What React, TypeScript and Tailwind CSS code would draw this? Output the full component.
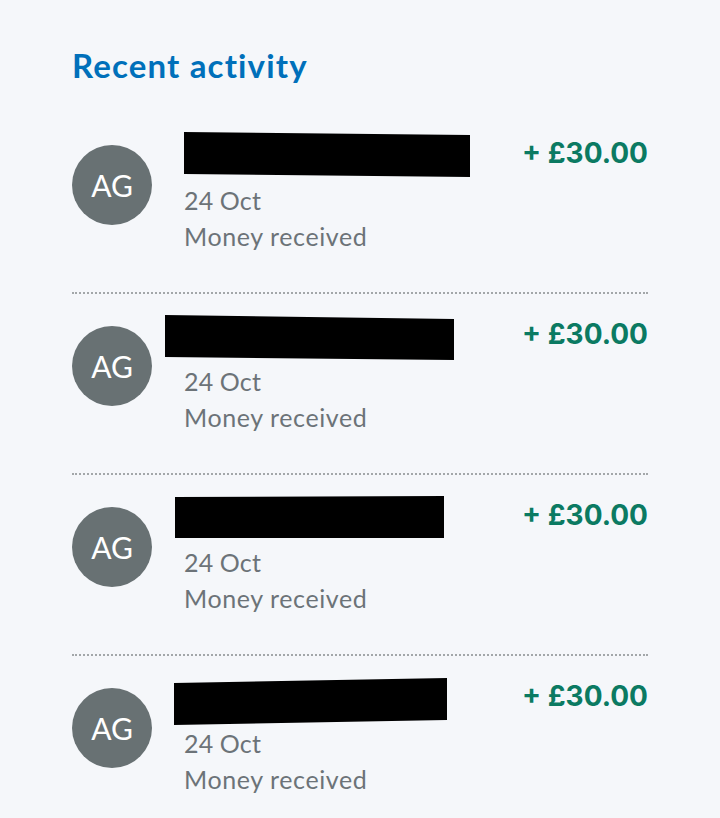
const bars = [
  "20,0 306,3 306,45 20,42",
  "1,2 290,6 290,47 1,44",
  "11,3 280,2 280,44 11,44",
  "10,8 283,3 283,45 10,50",
];

function Redaction({ points }: { points: string }) {
  return (
    <svg className="absolute left-[-20px] top-[-1px]" width="310" height="52" viewBox="0 0 310 52">
      <polygon points={points} fill="#000" />
    </svg>
  );
}

function ActivityRow({ bar, last }: { bar: string; last: boolean }) {
  return (
    <div className={last ? "flex h-[181px] pt-[20px]" : "flex h-[181px] pt-[20px] border-b-2 border-dotted border-[#a3a7a9]"}>
      <div className="mt-[12px] flex h-[80px] w-[80px] shrink-0 items-center justify-center rounded-full bg-[#687173] text-[30px] text-white">
        AG
      </div>
      <div className="ml-[32px] flex-1">
        <div className="relative h-[36px]">
          <Redaction points={bar} />
        </div>
        <div className="mt-[13px] text-[25px] leading-[36px] tracking-[0.15px] text-[#6c7378]">24 Oct</div>
        <div className="text-[25px] leading-[36px] tracking-[0.6px] text-[#6c7378]">Money received</div>
      </div>
      <div className="mt-[2px] font-['Inter',sans-serif] text-[28px] font-bold leading-[36px] text-[#0b7a62]">+ £30.00</div>
    </div>
  );
}

export default function App() {
  return (
    <div className="h-[818px] overflow-hidden bg-[#f5f7fa] px-[72px] font-['Lato','Noto_Sans',sans-serif]">
      <h1 className="pt-[43px] text-[33px] font-bold leading-[44px] tracking-[1.15px] text-[#0070ba]">Recent activity</h1>
      <div className="mt-[26px]">
        {bars.map((bar, i) => (
          <ActivityRow key={i} bar={bar} last={i === bars.length - 1} />
        ))}
      </div>
    </div>
  );
}
